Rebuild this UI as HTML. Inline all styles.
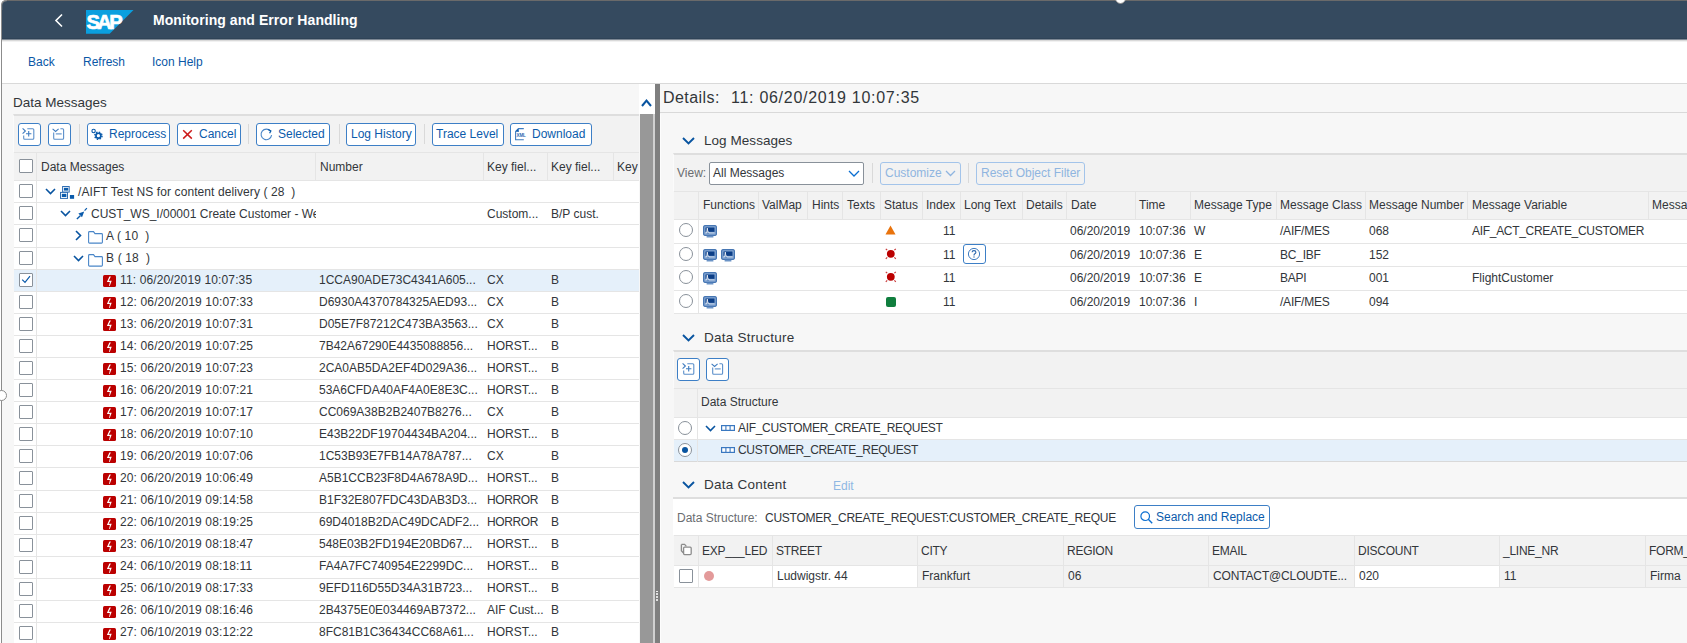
<!DOCTYPE html><html><head><meta charset="utf-8"><style>
*{margin:0;padding:0;box-sizing:border-box}
html,body{width:1687px;height:643px;overflow:hidden;background:#f7f7f7}
body{position:relative;font-family:"Liberation Sans",sans-serif;color:#32363a;font-size:12px}
.t{position:absolute;white-space:nowrap;line-height:14px}
.a{position:absolute}
svg{position:absolute;overflow:visible}
.cb{position:absolute;width:14px;height:14px;border:1px solid #89919a;border-radius:1px;background:#fff}
.btn{position:absolute;height:23px;border:1px solid #3d7fc6;border-radius:3px;color:#0b5bab;background:#fff;line-height:21px;font-size:12px;white-space:nowrap}
.sep{position:absolute;width:1px;height:20px;background:#d9d9d9}
.u{letter-spacing:-0.3px}
.rd{position:absolute;width:14px;height:14px;border:1px solid #89919a;border-radius:50%;background:#fff}
</style></head><body>
<div style="position:absolute;left:0px;top:0px;width:1687px;height:1px;background:#6a6a6a"></div>
<div style="position:absolute;left:0px;top:1px;width:1687px;height:39px;background:#354a5f"></div>
<div style="position:absolute;left:0px;top:38px;width:1687px;height:1px;background:#2f4357"></div>
<div style="position:absolute;left:0px;top:39px;width:1687px;height:1px;background:#7d8894"></div>
<svg style="left:54px;top:13px" width="10" height="15"><path d="M8 1.5 L2 7.5 L8 13.5" stroke="#fff" stroke-width="1.6" fill="none"/></svg>
<svg style="left:85.5px;top:9.7px" width="48" height="24" viewBox="0 0 48 24"><path d="M0 0 H47.5 L23.7 23.7 H0 Z" fill="#0a9fdf"/><text x="0.5" y="19.3" font-family="Liberation Sans" font-weight="bold" font-size="20.5" fill="#fff" stroke="#fff" stroke-width="0.7" letter-spacing="-2.6" transform="scale(0.98,1)">SAP</text></svg>
<div class="t" style="left:153px;top:12px;font-size:14px;font-weight:bold;color:#fff;line-height:16px;letter-spacing:0.06px">Monitoring and Error Handling</div>
<div style="position:absolute;left:0px;top:40px;width:1687px;height:44px;background:#fff"></div>
<div style="position:absolute;left:0px;top:40px;width:1687px;height:1px;background:#d9d9d9"></div>
<div style="position:absolute;left:0px;top:41px;width:1687px;height:1px;background:#f1f1f1"></div>
<div style="position:absolute;left:0px;top:83px;width:1687px;height:1px;background:#d9d9d9"></div>
<div class="t" style="left:28px;top:54px;color:#0a57a6;font-size:12px;line-height:16px">Back</div>
<div class="t" style="left:83px;top:54px;color:#0a57a6;font-size:12px;line-height:16px">Refresh</div>
<div class="t" style="left:152px;top:54px;color:#0a57a6;font-size:12px;line-height:16px">Icon Help</div>
<div style="position:absolute;left:1px;top:0px;width:1px;height:643px;background:#8c8c8c"></div>
<div style="position:absolute;left:2px;top:84px;width:637px;height:559px;background:#f7f7f7"></div>
<div class="t" style="left:13px;top:95px;font-size:13.5px;line-height:16px">Data Messages</div>
<div style="position:absolute;left:639px;top:84px;width:15px;height:30px;background:#fff"></div>
<svg style="left:641px;top:98px" width="11" height="9"><path d="M1 8 L5.5 2.5 L10 8" stroke="#0854a0" stroke-width="2" fill="none"/></svg>
<div style="position:absolute;left:640px;top:114px;width:13px;height:529px;background:#989898"></div>
<div style="position:absolute;left:653px;top:84px;width:2px;height:30px;background:#fff"></div>
<div style="position:absolute;left:653px;top:114px;width:2px;height:529px;background:#d0d0d0"></div>
<div style="position:absolute;left:655px;top:84px;width:5px;height:559px;background:#7f7f7f"></div>
<div style="position:absolute;left:656px;top:590.5px;width:2px;height:1.8px;background:#fff;border-radius:1px"></div>
<div style="position:absolute;left:656px;top:593.3px;width:2px;height:1.8px;background:#fff;border-radius:1px"></div>
<div style="position:absolute;left:656px;top:596.1px;width:2px;height:1.8px;background:#fff;border-radius:1px"></div>
<div style="position:absolute;left:656px;top:598.9px;width:2px;height:1.8px;background:#fff;border-radius:1px"></div>
<div style="position:absolute;left:13px;top:114px;width:626px;height:38px;background:#f2f2f2;border-top:2px solid #dedede;border-left:1px solid #fbfbfb"></div>
<div class="btn" style="left:18px;top:123px;width:23px;height:23px"></div>
<div class="btn" style="left:48px;top:123px;width:23px;height:23px"></div>
<svg style="left:22px;top:128px" width="14" height="14" viewBox="0 0 14 14"><path d="M0.6 0.3 L3.4 3 L0.6 5.7" stroke="#3f7cc0" stroke-width="1.1" fill="none"/><path d="M5.3 0.8 H10.8 Q11.8 0.8 11.8 1.8 V10.2 Q11.8 11.2 10.8 11.2 H2.7 Q1.7 11.2 1.7 10.2 V7.6" stroke="#5b8fca" stroke-width="1.1" fill="none"/><path d="M6.7 3.1 V8.5 M4 5.8 H9.4" stroke="#3f7cc0" stroke-width="1.1"/></svg>
<svg style="left:52px;top:128px" width="14" height="14" viewBox="0 0 14 14"><path d="M0.6 0.8 L3.6 3.4 L6.6 0.8" stroke="#3f7cc0" stroke-width="1.1" fill="none"/><path d="M8.4 0.8 H10.6 Q11.6 0.8 11.6 1.8 V10.2 Q11.6 11.2 10.6 11.2 H2.7 Q1.7 11.2 1.7 10.2 V4.4" stroke="#5b8fca" stroke-width="1.1" fill="none"/><path d="M3.8 5.9 H9.7" stroke="#5b8fca" stroke-width="1.1"/></svg>
<div class="sep" style="left:79px;top:124px"></div>
<div class="btn" style="left:87px;top:123px;width:83px"><span style="position:absolute;left:21px;top:0">Reprocess</span><svg style="left:0;top:0" width="20" height="20" viewBox="0 0 20 20"><circle cx="5.6" cy="7" r="1.7" stroke="#0b5bab" stroke-width="1.1" fill="none"/><circle cx="10.4" cy="11.7" r="2.45" stroke="#0b5bab" stroke-width="1.7" fill="none"/><circle cx="10.4" cy="11.7" r="3.6" stroke="#0b5bab" stroke-width="1.5" fill="none" stroke-dasharray="1.45 1.38"/></svg></div>
<div class="btn" style="left:177px;top:123px;width:64px"><span style="position:absolute;left:21px;top:0">Cancel</span><svg style="left:4px;top:5px" width="11" height="11" viewBox="0 0 11 11"><path d="M1.2 1.2 L9.8 9.6 M9.8 1.2 L1.2 9.6" stroke="#cc1a1a" stroke-width="1.5"/></svg></div>
<div class="sep" style="left:248px;top:124px"></div>
<div class="btn" style="left:256px;top:123px;width:74px"><span style="position:absolute;left:21px;top:0">Selected</span><svg style="left:3px;top:4px" width="13" height="13" viewBox="0 0 13 13"><path d="M10.6 3.2 A5.3 5.3 0 1 0 11.6 7.2" stroke="#4a86c8" stroke-width="1.1" fill="none"/><path d="M8.2 1.4 L10.9 2.9 L9.6 5.3" stroke="#0b5bab" stroke-width="1.2" fill="none"/></svg></div>
<div class="sep" style="left:339px;top:124px"></div>
<div class="btn" style="left:346px;top:123px;width:70px"><span style="position:absolute;left:4px;top:0">Log History</span></div>
<div class="sep" style="left:424px;top:124px"></div>
<div class="btn" style="left:432px;top:123px;width:72px"><span style="position:absolute;left:3px;top:0">Trace Level</span></div>
<div class="btn" style="left:510px;top:123px;width:82px"><span style="position:absolute;left:21px;top:0">Download</span><svg style="left:3.5px;top:3.5px" width="14" height="14" viewBox="0 0 14 14"><path d="M8.8 0.6 H3.4 L0.6 3.4 V11.8 H8.8 M0.6 3.4 H3.4 V0.6" stroke="#3f7cc0" stroke-width="1.1" fill="none"/><path d="M1 3 L3 1 V3 Z" fill="#0b5bab"/><text x="1.6" y="8.6" font-size="4.6" font-family="Liberation Sans" font-weight="bold" fill="#2f6db3" letter-spacing="-0.2">XML</text></svg></div>
<div style="position:absolute;left:14px;top:152px;width:625px;height:29px;background:#f2f2f2;border-top:1px solid #e5e5e5;border-bottom:1px solid #e5e5e5"></div>
<div style="position:absolute;left:36px;top:153px;width:1px;height:28px;background:#e5e5e5"></div>
<div style="position:absolute;left:315px;top:153px;width:1px;height:28px;background:#e5e5e5"></div>
<div style="position:absolute;left:483px;top:153px;width:1px;height:28px;background:#e5e5e5"></div>
<div style="position:absolute;left:547px;top:153px;width:1px;height:28px;background:#e5e5e5"></div>
<div style="position:absolute;left:613px;top:153px;width:1px;height:28px;background:#e5e5e5"></div>
<div class="cb" style="left:19px;top:159px"></div>
<div class="t" style="left:41px;top:160px;">Data Messages</div>
<div class="t" style="left:320px;top:160px;">Number</div>
<div class="t" style="left:487px;top:160px;">Key fiel...</div>
<div class="t" style="left:551px;top:160px;">Key fiel...</div>
<div class="t" style="left:617px;top:160px;">Key</div>
<div style="position:absolute;left:14px;top:181px;width:625px;height:22px;background:#fff;border-bottom:1px solid #e5e5e5"></div>
<div style="position:absolute;left:36px;top:181px;width:1px;height:22px;background:#e5e5e5"></div>
<div class="cb" style="left:19px;top:184px"></div>
<svg style="left:45px;top:188px" width="11" height="7" viewBox="0 0 11 7"><path d="M1 1 L5.5 5.5 L10 1" stroke="#0854a0" stroke-width="1.6" fill="none"/></svg>
<svg style="left:60px;top:186px" width="15" height="13" viewBox="0 0 15 13"><rect x="2.6" y="0.5" width="6.6" height="5.6" stroke="#2f6db3" stroke-width="1" fill="#fff"/><rect x="3.9" y="1.8" width="4.3" height="2.8" fill="#0b5bab"/><rect x="0.5" y="6.4" width="7" height="6" stroke="#2f6db3" stroke-width="1" fill="#fff"/><rect x="1.8" y="7.8" width="4.6" height="3.2" fill="#0b5bab"/><rect x="9.9" y="9" width="4.2" height="3.8" fill="#0b5bab"/></svg>
<div class="t" style="left:78px;top:185px;letter-spacing:0.09px">/AIFT Test NS for content delivery ( 28&nbsp; )</div>
<div style="position:absolute;left:14px;top:203px;width:625px;height:22px;background:#fff;border-bottom:1px solid #e5e5e5"></div>
<div style="position:absolute;left:36px;top:203px;width:1px;height:22px;background:#e5e5e5"></div>
<div class="cb" style="left:19px;top:206px"></div>
<svg style="left:60px;top:210px" width="11" height="7" viewBox="0 0 11 7"><path d="M1 1 L5.5 5.5 L10 1" stroke="#0854a0" stroke-width="1.6" fill="none"/></svg>
<svg style="left:76px;top:207px" width="12" height="13" viewBox="0 0 12 13"><path d="M0.9 12.1 L4.3 8.7" stroke="#0b5bab" stroke-width="1.4"/><path d="M8.2 4.4 L2.4 6.6 L6 10.2 Z" fill="#0b5bab"/><path d="M8.6 3.6 L10.9 1.2" stroke="#0b5bab" stroke-width="1.2"/></svg>
<div class="t" style="left:91px;top:207px;width:225px;overflow:hidden">CUST_WS_I/00001 Create Customer - Web</div>
<div class="t" style="left:487px;top:207px;">Custom...</div>
<div class="t" style="left:551px;top:207px;">B/P cust.</div>
<div style="position:absolute;left:14px;top:225px;width:625px;height:23px;background:#fff;border-bottom:1px solid #e5e5e5"></div>
<div style="position:absolute;left:36px;top:225px;width:1px;height:23px;background:#e5e5e5"></div>
<div class="cb" style="left:19px;top:228px"></div>
<svg style="left:75px;top:230px" width="7" height="11" viewBox="0 0 7 11"><path d="M1 1 L5.5 5.5 L1 10" stroke="#0854a0" stroke-width="1.6" fill="none"/></svg>
<svg style="left:88px;top:231px" width="16" height="13" viewBox="0 0 16 13"><path d="M1.5 0.6 H5.5 L7 2.6 H13.5 Q14.4 2.6 14.4 3.5 V11.2 Q14.4 12.1 13.5 12.1 H1.5 Q0.6 12.1 0.6 11.2 V1.5 Q0.6 0.6 1.5 0.6 Z" stroke="#4a86c8" stroke-width="1.1" fill="none"/></svg>
<div class="t" style="left:106px;top:229px;letter-spacing:0.15px">A ( 10&nbsp; )</div>
<div style="position:absolute;left:14px;top:248px;width:625px;height:22px;background:#fff;border-bottom:1px solid #e5e5e5"></div>
<div style="position:absolute;left:36px;top:248px;width:1px;height:22px;background:#e5e5e5"></div>
<div class="cb" style="left:19px;top:251px"></div>
<svg style="left:73px;top:255px" width="11" height="7" viewBox="0 0 11 7"><path d="M1 1 L5.5 5.5 L10 1" stroke="#0854a0" stroke-width="1.6" fill="none"/></svg>
<svg style="left:88px;top:254px" width="16" height="13" viewBox="0 0 16 13"><path d="M1.5 0.6 H5.5 L7 2.6 H13.5 Q14.4 2.6 14.4 3.5 V11.2 Q14.4 12.1 13.5 12.1 H1.5 Q0.6 12.1 0.6 11.2 V1.5 Q0.6 0.6 1.5 0.6 Z" stroke="#4a86c8" stroke-width="1.1" fill="none"/></svg>
<div class="t" style="left:106px;top:251px;letter-spacing:0.15px">B ( 18&nbsp; )</div>
<div style="position:absolute;left:14px;top:270px;width:625px;height:22px;background:#e5f0fa;border-bottom:1px solid #e5e5e5"></div>
<div style="position:absolute;left:36px;top:270px;width:1px;height:22px;background:#e5e5e5"></div>
<div class="cb" style="left:19px;top:273px"></div>
<svg style="left:21px;top:275px" width="10" height="9" viewBox="0 0 10 9"><path d="M1.2 4.6 L4 7.4 L9 1.2" stroke="#0b5bab" stroke-width="1.2" fill="none"/></svg>
<div class="a" style="left:103.4px;top:274.7px;width:12.6px;height:12.4px;background:#bb0000;border-radius:1.5px"><svg style="left:0;top:0" width="13" height="13" viewBox="0 0 13 13"><path d="M6.4 1.4 L7.9 1.4 L5.7 5.7 L8.7 5.7 L6.7 11.1 L6.1 11.1 L6.9 6.9 L3.9 6.9 Z" fill="#fff"/></svg></div>
<div class="t" style="left:120px;top:273px;letter-spacing:0.13px">11: 06/20/2019 10:07:35</div>
<div class="t" style="left:319px;top:273px;">1CCA90ADE73C4341A605...</div>
<div class="t" style="left:487px;top:273px;">CX</div>
<div class="t" style="left:551px;top:273px;">B</div>
<div style="position:absolute;left:14px;top:292px;width:625px;height:22px;background:#fff;border-bottom:1px solid #e5e5e5"></div>
<div style="position:absolute;left:36px;top:292px;width:1px;height:22px;background:#e5e5e5"></div>
<div class="cb" style="left:19px;top:295px"></div>
<div class="a" style="left:103.4px;top:296.7px;width:12.6px;height:12.4px;background:#bb0000;border-radius:1.5px"><svg style="left:0;top:0" width="13" height="13" viewBox="0 0 13 13"><path d="M6.4 1.4 L7.9 1.4 L5.7 5.7 L8.7 5.7 L6.7 11.1 L6.1 11.1 L6.9 6.9 L3.9 6.9 Z" fill="#fff"/></svg></div>
<div class="t" style="left:120px;top:295px;letter-spacing:0.13px">12: 06/20/2019 10:07:33</div>
<div class="t" style="left:319px;top:295px;">D6930A4370784325AED93...</div>
<div class="t" style="left:487px;top:295px;">CX</div>
<div class="t" style="left:551px;top:295px;">B</div>
<div style="position:absolute;left:14px;top:314px;width:625px;height:22px;background:#fff;border-bottom:1px solid #e5e5e5"></div>
<div style="position:absolute;left:36px;top:314px;width:1px;height:22px;background:#e5e5e5"></div>
<div class="cb" style="left:19px;top:317px"></div>
<div class="a" style="left:103.4px;top:318.7px;width:12.6px;height:12.4px;background:#bb0000;border-radius:1.5px"><svg style="left:0;top:0" width="13" height="13" viewBox="0 0 13 13"><path d="M6.4 1.4 L7.9 1.4 L5.7 5.7 L8.7 5.7 L6.7 11.1 L6.1 11.1 L6.9 6.9 L3.9 6.9 Z" fill="#fff"/></svg></div>
<div class="t" style="left:120px;top:317px;letter-spacing:0.13px">13: 06/20/2019 10:07:31</div>
<div class="t" style="left:319px;top:317px;">D05E7F87212C473BA3563...</div>
<div class="t" style="left:487px;top:317px;">CX</div>
<div class="t" style="left:551px;top:317px;">B</div>
<div style="position:absolute;left:14px;top:336px;width:625px;height:22px;background:#fff;border-bottom:1px solid #e5e5e5"></div>
<div style="position:absolute;left:36px;top:336px;width:1px;height:22px;background:#e5e5e5"></div>
<div class="cb" style="left:19px;top:339px"></div>
<div class="a" style="left:103.4px;top:340.7px;width:12.6px;height:12.4px;background:#bb0000;border-radius:1.5px"><svg style="left:0;top:0" width="13" height="13" viewBox="0 0 13 13"><path d="M6.4 1.4 L7.9 1.4 L5.7 5.7 L8.7 5.7 L6.7 11.1 L6.1 11.1 L6.9 6.9 L3.9 6.9 Z" fill="#fff"/></svg></div>
<div class="t" style="left:120px;top:339px;letter-spacing:0.13px">14: 06/20/2019 10:07:25</div>
<div class="t" style="left:319px;top:339px;">7B42A67290E4435088856...</div>
<div class="t" style="left:487px;top:339px;">HORST...</div>
<div class="t" style="left:551px;top:339px;">B</div>
<div style="position:absolute;left:14px;top:358px;width:625px;height:22px;background:#fff;border-bottom:1px solid #e5e5e5"></div>
<div style="position:absolute;left:36px;top:358px;width:1px;height:22px;background:#e5e5e5"></div>
<div class="cb" style="left:19px;top:361px"></div>
<div class="a" style="left:103.4px;top:362.7px;width:12.6px;height:12.4px;background:#bb0000;border-radius:1.5px"><svg style="left:0;top:0" width="13" height="13" viewBox="0 0 13 13"><path d="M6.4 1.4 L7.9 1.4 L5.7 5.7 L8.7 5.7 L6.7 11.1 L6.1 11.1 L6.9 6.9 L3.9 6.9 Z" fill="#fff"/></svg></div>
<div class="t" style="left:120px;top:361px;letter-spacing:0.13px">15: 06/20/2019 10:07:23</div>
<div class="t" style="left:319px;top:361px;">2CA0AB5DA2EF4D029A36...</div>
<div class="t" style="left:487px;top:361px;">HORST...</div>
<div class="t" style="left:551px;top:361px;">B</div>
<div style="position:absolute;left:14px;top:380px;width:625px;height:22px;background:#fff;border-bottom:1px solid #e5e5e5"></div>
<div style="position:absolute;left:36px;top:380px;width:1px;height:22px;background:#e5e5e5"></div>
<div class="cb" style="left:19px;top:383px"></div>
<div class="a" style="left:103.4px;top:384.7px;width:12.6px;height:12.4px;background:#bb0000;border-radius:1.5px"><svg style="left:0;top:0" width="13" height="13" viewBox="0 0 13 13"><path d="M6.4 1.4 L7.9 1.4 L5.7 5.7 L8.7 5.7 L6.7 11.1 L6.1 11.1 L6.9 6.9 L3.9 6.9 Z" fill="#fff"/></svg></div>
<div class="t" style="left:120px;top:383px;letter-spacing:0.13px">16: 06/20/2019 10:07:21</div>
<div class="t" style="left:319px;top:383px;">53A6CFDA40AF4A0E8E3C...</div>
<div class="t" style="left:487px;top:383px;">HORST...</div>
<div class="t" style="left:551px;top:383px;">B</div>
<div style="position:absolute;left:14px;top:402px;width:625px;height:22px;background:#fff;border-bottom:1px solid #e5e5e5"></div>
<div style="position:absolute;left:36px;top:402px;width:1px;height:22px;background:#e5e5e5"></div>
<div class="cb" style="left:19px;top:405px"></div>
<div class="a" style="left:103.4px;top:406.7px;width:12.6px;height:12.4px;background:#bb0000;border-radius:1.5px"><svg style="left:0;top:0" width="13" height="13" viewBox="0 0 13 13"><path d="M6.4 1.4 L7.9 1.4 L5.7 5.7 L8.7 5.7 L6.7 11.1 L6.1 11.1 L6.9 6.9 L3.9 6.9 Z" fill="#fff"/></svg></div>
<div class="t" style="left:120px;top:405px;letter-spacing:0.13px">17: 06/20/2019 10:07:17</div>
<div class="t" style="left:319px;top:405px;">CC069A38B2B2407B8276...</div>
<div class="t" style="left:487px;top:405px;">CX</div>
<div class="t" style="left:551px;top:405px;">B</div>
<div style="position:absolute;left:14px;top:424px;width:625px;height:22px;background:#fff;border-bottom:1px solid #e5e5e5"></div>
<div style="position:absolute;left:36px;top:424px;width:1px;height:22px;background:#e5e5e5"></div>
<div class="cb" style="left:19px;top:427px"></div>
<div class="a" style="left:103.4px;top:428.7px;width:12.6px;height:12.4px;background:#bb0000;border-radius:1.5px"><svg style="left:0;top:0" width="13" height="13" viewBox="0 0 13 13"><path d="M6.4 1.4 L7.9 1.4 L5.7 5.7 L8.7 5.7 L6.7 11.1 L6.1 11.1 L6.9 6.9 L3.9 6.9 Z" fill="#fff"/></svg></div>
<div class="t" style="left:120px;top:427px;letter-spacing:0.13px">18: 06/20/2019 10:07:10</div>
<div class="t" style="left:319px;top:427px;">E43B22DF19704434BA204...</div>
<div class="t" style="left:487px;top:427px;">HORST...</div>
<div class="t" style="left:551px;top:427px;">B</div>
<div style="position:absolute;left:14px;top:446px;width:625px;height:22px;background:#fff;border-bottom:1px solid #e5e5e5"></div>
<div style="position:absolute;left:36px;top:446px;width:1px;height:22px;background:#e5e5e5"></div>
<div class="cb" style="left:19px;top:449px"></div>
<div class="a" style="left:103.4px;top:450.7px;width:12.6px;height:12.4px;background:#bb0000;border-radius:1.5px"><svg style="left:0;top:0" width="13" height="13" viewBox="0 0 13 13"><path d="M6.4 1.4 L7.9 1.4 L5.7 5.7 L8.7 5.7 L6.7 11.1 L6.1 11.1 L6.9 6.9 L3.9 6.9 Z" fill="#fff"/></svg></div>
<div class="t" style="left:120px;top:449px;letter-spacing:0.13px">19: 06/20/2019 10:07:06</div>
<div class="t" style="left:319px;top:449px;">1C53B93E7FB14A78A787...</div>
<div class="t" style="left:487px;top:449px;">CX</div>
<div class="t" style="left:551px;top:449px;">B</div>
<div style="position:absolute;left:14px;top:468px;width:625px;height:23px;background:#fff;border-bottom:1px solid #e5e5e5"></div>
<div style="position:absolute;left:36px;top:468px;width:1px;height:23px;background:#e5e5e5"></div>
<div class="cb" style="left:19px;top:471px"></div>
<div class="a" style="left:103.4px;top:472.7px;width:12.6px;height:12.4px;background:#bb0000;border-radius:1.5px"><svg style="left:0;top:0" width="13" height="13" viewBox="0 0 13 13"><path d="M6.4 1.4 L7.9 1.4 L5.7 5.7 L8.7 5.7 L6.7 11.1 L6.1 11.1 L6.9 6.9 L3.9 6.9 Z" fill="#fff"/></svg></div>
<div class="t" style="left:120px;top:471px;letter-spacing:0.13px">20: 06/20/2019 10:06:49</div>
<div class="t" style="left:319px;top:471px;">A5B1CCB23F8D4A678A9D...</div>
<div class="t" style="left:487px;top:471px;">HORST...</div>
<div class="t" style="left:551px;top:471px;">B</div>
<div style="position:absolute;left:14px;top:491px;width:625px;height:22px;background:#fff;border-bottom:1px solid #e5e5e5"></div>
<div style="position:absolute;left:36px;top:491px;width:1px;height:22px;background:#e5e5e5"></div>
<div class="cb" style="left:19px;top:494px"></div>
<div class="a" style="left:103.4px;top:495.7px;width:12.6px;height:12.4px;background:#bb0000;border-radius:1.5px"><svg style="left:0;top:0" width="13" height="13" viewBox="0 0 13 13"><path d="M6.4 1.4 L7.9 1.4 L5.7 5.7 L8.7 5.7 L6.7 11.1 L6.1 11.1 L6.9 6.9 L3.9 6.9 Z" fill="#fff"/></svg></div>
<div class="t" style="left:120px;top:493px;letter-spacing:0.13px">21: 06/10/2019 09:14:58</div>
<div class="t" style="left:319px;top:493px;">B1F32E807FDC43DAB3D3...</div>
<div class="t" style="left:487px;top:493px;letter-spacing:-0.4px">HORROR</div>
<div class="t" style="left:551px;top:493px;">B</div>
<div style="position:absolute;left:14px;top:513px;width:625px;height:22px;background:#fff;border-bottom:1px solid #e5e5e5"></div>
<div style="position:absolute;left:36px;top:513px;width:1px;height:22px;background:#e5e5e5"></div>
<div class="cb" style="left:19px;top:516px"></div>
<div class="a" style="left:103.4px;top:517.7px;width:12.6px;height:12.4px;background:#bb0000;border-radius:1.5px"><svg style="left:0;top:0" width="13" height="13" viewBox="0 0 13 13"><path d="M6.4 1.4 L7.9 1.4 L5.7 5.7 L8.7 5.7 L6.7 11.1 L6.1 11.1 L6.9 6.9 L3.9 6.9 Z" fill="#fff"/></svg></div>
<div class="t" style="left:120px;top:515px;letter-spacing:0.13px">22: 06/10/2019 08:19:25</div>
<div class="t" style="left:319px;top:515px;">69D4018B2DAC49DCADF2...</div>
<div class="t" style="left:487px;top:515px;letter-spacing:-0.4px">HORROR</div>
<div class="t" style="left:551px;top:515px;">B</div>
<div style="position:absolute;left:14px;top:535px;width:625px;height:22px;background:#fff;border-bottom:1px solid #e5e5e5"></div>
<div style="position:absolute;left:36px;top:535px;width:1px;height:22px;background:#e5e5e5"></div>
<div class="cb" style="left:19px;top:538px"></div>
<div class="a" style="left:103.4px;top:539.7px;width:12.6px;height:12.4px;background:#bb0000;border-radius:1.5px"><svg style="left:0;top:0" width="13" height="13" viewBox="0 0 13 13"><path d="M6.4 1.4 L7.9 1.4 L5.7 5.7 L8.7 5.7 L6.7 11.1 L6.1 11.1 L6.9 6.9 L3.9 6.9 Z" fill="#fff"/></svg></div>
<div class="t" style="left:120px;top:537px;letter-spacing:0.13px">23: 06/10/2019 08:18:47</div>
<div class="t" style="left:319px;top:537px;">548E03B2FD194E20BD67...</div>
<div class="t" style="left:487px;top:537px;">HORST...</div>
<div class="t" style="left:551px;top:537px;">B</div>
<div style="position:absolute;left:14px;top:557px;width:625px;height:22px;background:#fff;border-bottom:1px solid #e5e5e5"></div>
<div style="position:absolute;left:36px;top:557px;width:1px;height:22px;background:#e5e5e5"></div>
<div class="cb" style="left:19px;top:560px"></div>
<div class="a" style="left:103.4px;top:561.7px;width:12.6px;height:12.4px;background:#bb0000;border-radius:1.5px"><svg style="left:0;top:0" width="13" height="13" viewBox="0 0 13 13"><path d="M6.4 1.4 L7.9 1.4 L5.7 5.7 L8.7 5.7 L6.7 11.1 L6.1 11.1 L6.9 6.9 L3.9 6.9 Z" fill="#fff"/></svg></div>
<div class="t" style="left:120px;top:559px;letter-spacing:0.13px">24: 06/10/2019 08:18:11</div>
<div class="t" style="left:319px;top:559px;">FA4A7FC740954E2299DC...</div>
<div class="t" style="left:487px;top:559px;">HORST...</div>
<div class="t" style="left:551px;top:559px;">B</div>
<div style="position:absolute;left:14px;top:579px;width:625px;height:22px;background:#fff;border-bottom:1px solid #e5e5e5"></div>
<div style="position:absolute;left:36px;top:579px;width:1px;height:22px;background:#e5e5e5"></div>
<div class="cb" style="left:19px;top:582px"></div>
<div class="a" style="left:103.4px;top:583.7px;width:12.6px;height:12.4px;background:#bb0000;border-radius:1.5px"><svg style="left:0;top:0" width="13" height="13" viewBox="0 0 13 13"><path d="M6.4 1.4 L7.9 1.4 L5.7 5.7 L8.7 5.7 L6.7 11.1 L6.1 11.1 L6.9 6.9 L3.9 6.9 Z" fill="#fff"/></svg></div>
<div class="t" style="left:120px;top:581px;letter-spacing:0.13px">25: 06/10/2019 08:17:33</div>
<div class="t" style="left:319px;top:581px;">9EFD116D55D34A31B723...</div>
<div class="t" style="left:487px;top:581px;">HORST...</div>
<div class="t" style="left:551px;top:581px;">B</div>
<div style="position:absolute;left:14px;top:601px;width:625px;height:22px;background:#fff;border-bottom:1px solid #e5e5e5"></div>
<div style="position:absolute;left:36px;top:601px;width:1px;height:22px;background:#e5e5e5"></div>
<div class="cb" style="left:19px;top:604px"></div>
<div class="a" style="left:103.4px;top:605.7px;width:12.6px;height:12.4px;background:#bb0000;border-radius:1.5px"><svg style="left:0;top:0" width="13" height="13" viewBox="0 0 13 13"><path d="M6.4 1.4 L7.9 1.4 L5.7 5.7 L8.7 5.7 L6.7 11.1 L6.1 11.1 L6.9 6.9 L3.9 6.9 Z" fill="#fff"/></svg></div>
<div class="t" style="left:120px;top:603px;letter-spacing:0.13px">26: 06/10/2019 08:16:46</div>
<div class="t" style="left:319px;top:603px;">2B4375E0E034469AB7372...</div>
<div class="t" style="left:487px;top:603px;">AIF Cust...</div>
<div class="t" style="left:551px;top:603px;">B</div>
<div style="position:absolute;left:14px;top:623px;width:625px;height:22px;background:#fff;border-bottom:1px solid #e5e5e5"></div>
<div style="position:absolute;left:36px;top:623px;width:1px;height:22px;background:#e5e5e5"></div>
<div class="cb" style="left:19px;top:626px"></div>
<div class="a" style="left:103.4px;top:627.7px;width:12.6px;height:12.4px;background:#bb0000;border-radius:1.5px"><svg style="left:0;top:0" width="13" height="13" viewBox="0 0 13 13"><path d="M6.4 1.4 L7.9 1.4 L5.7 5.7 L8.7 5.7 L6.7 11.1 L6.1 11.1 L6.9 6.9 L3.9 6.9 Z" fill="#fff"/></svg></div>
<div class="t" style="left:120px;top:625px;letter-spacing:0.13px">27: 06/10/2019 03:12:22</div>
<div class="t" style="left:319px;top:625px;">8FC81B1C36434CC68A61...</div>
<div class="t" style="left:487px;top:625px;">HORST...</div>
<div class="t" style="left:551px;top:625px;">B</div>
<div style="position:absolute;left:660px;top:84px;width:1027px;height:559px;background:#f7f7f7"></div>
<div style="position:absolute;left:660px;top:114px;width:1px;height:529px;background:#fdfdfd"></div>
<div class="t" style="left:663px;top:89px;font-size:16px;line-height:18px;letter-spacing:0.44px">Details:</div>
<div class="t" style="left:731px;top:89px;font-size:16px;line-height:18px;letter-spacing:0.72px">11: 06/20/2019 10:07:35</div>
<div style="position:absolute;left:660px;top:112px;width:1027px;height:1px;background:#d9d9d9"></div>
<svg style="left:682px;top:137px" width="13" height="8" viewBox="0 0 13 8"><path d="M1 1 L6.5 6.5 L12 1" stroke="#0854a0" stroke-width="1.9" fill="none"/></svg>
<div class="t" style="left:704px;top:133px;font-size:13.5px;line-height:16px;letter-spacing:0.05px">Log Messages</div>
<div style="position:absolute;left:673px;top:153px;width:1014px;height:38px;background:#f2f2f2;border-top:2px solid #dedede;border-left:1px solid #fbfbfb"></div>
<div class="t" style="left:677px;top:166px;color:#6a6d70">View:</div>
<div class="a" style="left:709px;top:162px;width:155px;height:23px;background:#fff;border:1px solid #89919a;border-radius:2px"></div>
<div class="t" style="left:713px;top:166px;">All Messages</div>
<svg style="left:848px;top:170px" width="12" height="8" viewBox="0 0 12 8"><path d="M1 1 L6 6 L11 1" stroke="#0a6ed1" stroke-width="1.3" fill="none"/></svg>
<div class="sep" style="left:872px;top:163px"></div>
<div class="btn" style="left:880px;top:162px;width:81px;border-color:#a3c4ea;color:#8fb5e0;background:transparent"><span style="position:absolute;left:4px">Customize</span></div>
<svg style="left:945px;top:170px" width="11" height="7" viewBox="0 0 11 7"><path d="M1 1 L5.5 5.5 L10 1" stroke="#8fb5e0" stroke-width="1.3" fill="none"/></svg>
<div class="sep" style="left:968px;top:163px"></div>
<div class="btn" style="left:976px;top:162px;width:109px;border-color:#a3c4ea;color:#8fb5e0;background:transparent"><span style="position:absolute;left:4px">Reset Object Filter</span></div>
<div style="position:absolute;left:674px;top:191px;width:1013px;height:29px;background:#f2f2f2;border-top:1px solid #e5e5e5;border-bottom:1px solid #e5e5e5"></div>
<div style="position:absolute;left:698px;top:192px;width:1px;height:28px;background:#e5e5e5"></div>
<div style="position:absolute;left:758px;top:192px;width:1px;height:28px;background:#e5e5e5"></div>
<div style="position:absolute;left:807px;top:192px;width:1px;height:28px;background:#e5e5e5"></div>
<div style="position:absolute;left:842px;top:192px;width:1px;height:28px;background:#e5e5e5"></div>
<div style="position:absolute;left:880px;top:192px;width:1px;height:28px;background:#e5e5e5"></div>
<div style="position:absolute;left:922px;top:192px;width:1px;height:28px;background:#e5e5e5"></div>
<div style="position:absolute;left:960px;top:192px;width:1px;height:28px;background:#e5e5e5"></div>
<div style="position:absolute;left:1022px;top:192px;width:1px;height:28px;background:#e5e5e5"></div>
<div style="position:absolute;left:1066px;top:192px;width:1px;height:28px;background:#e5e5e5"></div>
<div style="position:absolute;left:1135px;top:192px;width:1px;height:28px;background:#e5e5e5"></div>
<div style="position:absolute;left:1190px;top:192px;width:1px;height:28px;background:#e5e5e5"></div>
<div style="position:absolute;left:1276px;top:192px;width:1px;height:28px;background:#e5e5e5"></div>
<div style="position:absolute;left:1365px;top:192px;width:1px;height:28px;background:#e5e5e5"></div>
<div style="position:absolute;left:1467px;top:192px;width:1px;height:28px;background:#e5e5e5"></div>
<div style="position:absolute;left:1648px;top:192px;width:1px;height:28px;background:#e5e5e5"></div>
<div class="t" style="left:703px;top:198px;">Functions</div>
<div class="t" style="left:762px;top:198px;">ValMap</div>
<div class="t" style="left:812px;top:198px;">Hints</div>
<div class="t" style="left:847px;top:198px;">Texts</div>
<div class="t" style="left:884px;top:198px;">Status</div>
<div class="t" style="left:926px;top:198px;">Index</div>
<div class="t" style="left:964px;top:198px;">Long Text</div>
<div class="t" style="left:1026px;top:198px;">Details</div>
<div class="t" style="left:1071px;top:198px;">Date</div>
<div class="t" style="left:1139px;top:198px;">Time</div>
<div class="t" style="left:1194px;top:198px;">Message Type</div>
<div class="t" style="left:1280px;top:198px;">Message Class</div>
<div class="t" style="left:1369px;top:198px;">Message Number</div>
<div class="t" style="left:1472px;top:198px;">Message Variable</div>
<div class="t" style="left:1652px;top:198px;">Messa</div>
<div style="position:absolute;left:674px;top:220px;width:1013px;height:24px;background:#fff;border-bottom:1px solid #e5e5e5"></div>
<div style="position:absolute;left:698px;top:220px;width:1px;height:24px;background:#e5e5e5"></div>
<div class="rd" style="left:679px;top:223px"></div>
<svg style="left:702.5px;top:224.8px" width="14" height="13" viewBox="0 0 14 13"><rect x="0.5" y="0.5" width="13" height="10" rx="1.3" fill="#5a86bf" stroke="#4676b3" stroke-width="1"/><rect x="1.7" y="1.7" width="10.6" height="7.6" fill="#b7cbe4"/><rect x="2.2" y="2.2" width="9.6" height="6.6" fill="#5a86bf"/><rect x="2.6" y="2.6" width="8.8" height="4.2" fill="#0d3f87"/><path d="M2.4 7.9 H3.7 L4.3 3.1 L4.9 7.3 L5.5 6.9 L6 7.9 H11.6" stroke="#fff" stroke-width="0.8" fill="none"/><rect x="3.6" y="10.8" width="6.8" height="1.7" fill="#6b93c6"/></svg>
<svg style="left:885px;top:225px" width="11" height="10" viewBox="0 0 11 10"><path d="M5.5 0.5 L10.5 9.5 H0.5 Z" fill="#e9730c"/></svg>
<div class="t" style="left:943px;top:224px;">11</div>
<div class="t" style="left:1070px;top:224px;">06/20/2019</div>
<div class="t" style="left:1139px;top:224px;">10:07:36</div>
<div class="t" style="left:1194px;top:224px;">W</div>
<div class="t" style="left:1280px;top:224px;letter-spacing:-0.22px">/AIF/MES</div>
<div class="t" style="left:1369px;top:224px;">068</div>
<div class="t" style="left:1472px;top:224px;letter-spacing:-0.3px">AIF_ACT_CREATE_CUSTOMER</div>
<div style="position:absolute;left:674px;top:244px;width:1013px;height:23px;background:#fff;border-bottom:1px solid #e5e5e5"></div>
<div style="position:absolute;left:698px;top:244px;width:1px;height:23px;background:#e5e5e5"></div>
<div class="rd" style="left:679px;top:247px"></div>
<svg style="left:702.5px;top:248.8px" width="14" height="13" viewBox="0 0 14 13"><rect x="0.5" y="0.5" width="13" height="10" rx="1.3" fill="#5a86bf" stroke="#4676b3" stroke-width="1"/><rect x="1.7" y="1.7" width="10.6" height="7.6" fill="#b7cbe4"/><rect x="2.2" y="2.2" width="9.6" height="6.6" fill="#5a86bf"/><rect x="2.6" y="2.6" width="8.8" height="4.2" fill="#0d3f87"/><path d="M2.4 7.9 H3.7 L4.3 3.1 L4.9 7.3 L5.5 6.9 L6 7.9 H11.6" stroke="#fff" stroke-width="0.8" fill="none"/><rect x="3.6" y="10.8" width="6.8" height="1.7" fill="#6b93c6"/></svg>
<svg style="left:721.0px;top:248.8px" width="14" height="13" viewBox="0 0 14 13"><rect x="0.5" y="0.5" width="13" height="10" rx="1.3" fill="#5a86bf" stroke="#4676b3" stroke-width="1"/><rect x="1.7" y="1.7" width="10.6" height="7.6" fill="#b7cbe4"/><rect x="2.2" y="2.2" width="9.6" height="6.6" fill="#5a86bf"/><rect x="2.6" y="2.6" width="8.8" height="4.2" fill="#0d3f87"/><path d="M2.4 7.9 H3.7 L4.3 3.1 L4.9 7.3 L5.5 6.9 L6 7.9 H11.6" stroke="#fff" stroke-width="0.8" fill="none"/><rect x="3.6" y="10.8" width="6.8" height="1.7" fill="#6b93c6"/></svg>
<svg style="left:885px;top:248.2px" width="12" height="12" viewBox="0 0 12 12"><circle cx="5.8" cy="5.8" r="3.9" fill="#bb0000"/><path d="M0.8 0.8 L2.2 2.2 M10.8 0.8 L9.4 2.2 M0.8 10.8 L2.2 9.4 M10.8 10.8 L9.4 9.4" stroke="#c83a3a" stroke-width="1.2"/></svg>
<div class="t" style="left:943px;top:248px;">11</div>
<div class="btn" style="left:963px;top:244.4px;width:23px;height:19.5px"></div>
<svg style="left:967.2px;top:246.8px" width="14" height="14" viewBox="0 0 14 14"><circle cx="7" cy="7" r="5.6" stroke="#3f7cc0" stroke-width="1" fill="none"/><path d="M5.1 5.3 Q5.1 3.6 7 3.6 Q8.9 3.6 8.9 5.2 Q8.9 6.2 7.8 6.8 Q7 7.2 7 8.4" stroke="#2a66ad" stroke-width="1.1" fill="none"/><circle cx="7" cy="10" r="0.65" fill="#2a66ad"/></svg>
<div class="t" style="left:1070px;top:248px;">06/20/2019</div>
<div class="t" style="left:1139px;top:248px;">10:07:36</div>
<div class="t" style="left:1194px;top:248px;">E</div>
<div class="t" style="left:1280px;top:248px;letter-spacing:-0.22px">BC_IBF</div>
<div class="t" style="left:1369px;top:248px;">152</div>
<div style="position:absolute;left:674px;top:267px;width:1013px;height:24px;background:#fff;border-bottom:1px solid #e5e5e5"></div>
<div style="position:absolute;left:698px;top:267px;width:1px;height:24px;background:#e5e5e5"></div>
<div class="rd" style="left:679px;top:270px"></div>
<svg style="left:702.5px;top:271.8px" width="14" height="13" viewBox="0 0 14 13"><rect x="0.5" y="0.5" width="13" height="10" rx="1.3" fill="#5a86bf" stroke="#4676b3" stroke-width="1"/><rect x="1.7" y="1.7" width="10.6" height="7.6" fill="#b7cbe4"/><rect x="2.2" y="2.2" width="9.6" height="6.6" fill="#5a86bf"/><rect x="2.6" y="2.6" width="8.8" height="4.2" fill="#0d3f87"/><path d="M2.4 7.9 H3.7 L4.3 3.1 L4.9 7.3 L5.5 6.9 L6 7.9 H11.6" stroke="#fff" stroke-width="0.8" fill="none"/><rect x="3.6" y="10.8" width="6.8" height="1.7" fill="#6b93c6"/></svg>
<svg style="left:885px;top:271.2px" width="12" height="12" viewBox="0 0 12 12"><circle cx="5.8" cy="5.8" r="3.9" fill="#bb0000"/><path d="M0.8 0.8 L2.2 2.2 M10.8 0.8 L9.4 2.2 M0.8 10.8 L2.2 9.4 M10.8 10.8 L9.4 9.4" stroke="#c83a3a" stroke-width="1.2"/></svg>
<div class="t" style="left:943px;top:271px;">11</div>
<div class="t" style="left:1070px;top:271px;">06/20/2019</div>
<div class="t" style="left:1139px;top:271px;">10:07:36</div>
<div class="t" style="left:1194px;top:271px;">E</div>
<div class="t" style="left:1280px;top:271px;letter-spacing:-0.22px">BAPI</div>
<div class="t" style="left:1369px;top:271px;">001</div>
<div class="t" style="left:1472px;top:271px;">FlightCustomer</div>
<div style="position:absolute;left:674px;top:291px;width:1013px;height:23px;background:#fff;border-bottom:1px solid #e5e5e5"></div>
<div style="position:absolute;left:698px;top:291px;width:1px;height:23px;background:#e5e5e5"></div>
<div class="rd" style="left:679px;top:294px"></div>
<svg style="left:702.5px;top:295.8px" width="14" height="13" viewBox="0 0 14 13"><rect x="0.5" y="0.5" width="13" height="10" rx="1.3" fill="#5a86bf" stroke="#4676b3" stroke-width="1"/><rect x="1.7" y="1.7" width="10.6" height="7.6" fill="#b7cbe4"/><rect x="2.2" y="2.2" width="9.6" height="6.6" fill="#5a86bf"/><rect x="2.6" y="2.6" width="8.8" height="4.2" fill="#0d3f87"/><path d="M2.4 7.9 H3.7 L4.3 3.1 L4.9 7.3 L5.5 6.9 L6 7.9 H11.6" stroke="#fff" stroke-width="0.8" fill="none"/><rect x="3.6" y="10.8" width="6.8" height="1.7" fill="#6b93c6"/></svg>
<div class="a" style="left:886px;top:297px;width:10px;height:10px;background:#107e3e;border-radius:2px"></div>
<div class="t" style="left:943px;top:295px;">11</div>
<div class="t" style="left:1070px;top:295px;">06/20/2019</div>
<div class="t" style="left:1139px;top:295px;">10:07:36</div>
<div class="t" style="left:1194px;top:295px;">I</div>
<div class="t" style="left:1280px;top:295px;letter-spacing:-0.22px">/AIF/MES</div>
<div class="t" style="left:1369px;top:295px;">094</div>
<svg style="left:682px;top:334px" width="13" height="8" viewBox="0 0 13 8"><path d="M1 1 L6.5 6.5 L12 1" stroke="#0854a0" stroke-width="1.9" fill="none"/></svg>
<div class="t" style="left:704px;top:330px;font-size:13.5px;line-height:16px;letter-spacing:0.25px">Data Structure</div>
<div style="position:absolute;left:673px;top:350px;width:1014px;height:38px;background:#f2f2f2;border-top:2px solid #dedede;border-left:1px solid #fbfbfb"></div>
<div class="btn" style="left:677px;top:358px;width:23px;height:23px"></div>
<div class="btn" style="left:706px;top:358px;width:23px;height:23px"></div>
<svg style="left:682px;top:363px" width="14" height="14" viewBox="0 0 14 14"><path d="M0.6 0.3 L3.4 3 L0.6 5.7" stroke="#3f7cc0" stroke-width="1.1" fill="none"/><path d="M5.3 0.8 H10.8 Q11.8 0.8 11.8 1.8 V10.2 Q11.8 11.2 10.8 11.2 H2.7 Q1.7 11.2 1.7 10.2 V7.6" stroke="#5b8fca" stroke-width="1.1" fill="none"/><path d="M6.7 3.1 V8.5 M4 5.8 H9.4" stroke="#3f7cc0" stroke-width="1.1"/></svg>
<svg style="left:711px;top:363px" width="14" height="14" viewBox="0 0 14 14"><path d="M0.6 0.8 L3.6 3.4 L6.6 0.8" stroke="#3f7cc0" stroke-width="1.1" fill="none"/><path d="M8.4 0.8 H10.6 Q11.6 0.8 11.6 1.8 V10.2 Q11.6 11.2 10.6 11.2 H2.7 Q1.7 11.2 1.7 10.2 V4.4" stroke="#5b8fca" stroke-width="1.1" fill="none"/><path d="M3.8 5.9 H9.7" stroke="#5b8fca" stroke-width="1.1"/></svg>
<div style="position:absolute;left:674px;top:388px;width:1013px;height:30px;background:#f2f2f2;border-top:1px solid #e5e5e5;border-bottom:1px solid #e5e5e5"></div>
<div style="position:absolute;left:697px;top:389px;width:1px;height:29px;background:#e5e5e5"></div>
<div class="t" style="left:701px;top:395px;">Data Structure</div>
<div style="position:absolute;left:674px;top:418px;width:1013px;height:22px;background:#fff;border-bottom:1px solid #e5e5e5"></div>
<div style="position:absolute;left:697px;top:418px;width:1px;height:22px;background:#e5e5e5"></div>
<div class="rd" style="left:678px;top:421px"></div>
<svg style="left:705px;top:425px" width="11" height="7" viewBox="0 0 11 7"><path d="M1 1 L5.5 5.5 L10 1" stroke="#0854a0" stroke-width="1.6" fill="none"/></svg>
<svg style="left:721px;top:425px" width="14" height="6" viewBox="0 0 14 6"><rect x="0.6" y="0.6" width="12.8" height="4.8" stroke="#3a78c0" stroke-width="1.2" fill="#fff"/><path d="M4.9 0.5 V5.5 M9.1 0.5 V5.5" stroke="#3a78c0" stroke-width="1.1"/></svg>
<div class="t" style="left:738px;top:421px;letter-spacing:-0.31px">AIF_CUSTOMER_CREATE_REQUEST</div>
<div style="position:absolute;left:674px;top:440px;width:1013px;height:22px;background:#e5f0fa;border-bottom:1px solid #d9d9d9"></div>
<div style="position:absolute;left:697px;top:440px;width:1px;height:22px;background:#e5e5e5"></div>
<div class="rd" style="left:678px;top:443px"></div>
<div class="a" style="left:682px;top:447px;width:6px;height:6px;border-radius:50%;background:#0854a0"></div>
<svg style="left:721px;top:447px" width="14" height="6" viewBox="0 0 14 6"><rect x="0.6" y="0.6" width="12.8" height="4.8" stroke="#3a78c0" stroke-width="1.2" fill="#fff"/><path d="M4.9 0.5 V5.5 M9.1 0.5 V5.5" stroke="#3a78c0" stroke-width="1.1"/></svg>
<div class="t" style="left:738px;top:443px;letter-spacing:-0.33px">CUSTOMER_CREATE_REQUEST</div>
<svg style="left:682px;top:481px" width="13" height="8" viewBox="0 0 13 8"><path d="M1 1 L6.5 6.5 L12 1" stroke="#0854a0" stroke-width="1.9" fill="none"/></svg>
<div class="t" style="left:704px;top:477px;font-size:13.5px;line-height:16px;letter-spacing:0.25px">Data Content</div>
<div class="t" style="left:833px;top:478px;color:#8fb8e3;font-size:12px;line-height:16px">Edit</div>
<div style="position:absolute;left:673px;top:497px;width:1014px;height:38px;background:#fff;border-top:2px solid #dedede"></div>
<div class="t" style="left:677px;top:511px;color:#6a6d70">Data Structure:</div>
<div class="t" style="left:765px;top:511px;letter-spacing:-0.24px">CUSTOMER_CREATE_REQUEST:CUSTOMER_CREATE_REQUE</div>
<div class="btn" style="left:1134px;top:505px;width:136px;height:24px"><span style="position:absolute;left:21px;top:1px">Search and Replace</span><svg style="left:5px;top:5px" width="13" height="13" viewBox="0 0 13 13"><circle cx="5.2" cy="5.2" r="4.3" stroke="#0a6ed1" stroke-width="1.2" fill="none"/><path d="M8.3 8.3 L12.2 12.2" stroke="#0a6ed1" stroke-width="1.4"/></svg></div>
<div style="position:absolute;left:674px;top:535px;width:1013px;height:31px;background:#f2f2f2;border-top:1px solid #e5e5e5;border-bottom:1px solid #e5e5e5"></div>
<div style="position:absolute;left:698px;top:536px;width:1px;height:52px;background:#e5e5e5"></div>
<div style="position:absolute;left:772px;top:536px;width:1px;height:52px;background:#e5e5e5"></div>
<div style="position:absolute;left:917px;top:536px;width:1px;height:52px;background:#e5e5e5"></div>
<div style="position:absolute;left:1063px;top:536px;width:1px;height:52px;background:#e5e5e5"></div>
<div style="position:absolute;left:1208px;top:536px;width:1px;height:52px;background:#e5e5e5"></div>
<div style="position:absolute;left:1354px;top:536px;width:1px;height:52px;background:#e5e5e5"></div>
<div style="position:absolute;left:1499px;top:536px;width:1px;height:52px;background:#e5e5e5"></div>
<div style="position:absolute;left:1645px;top:536px;width:1px;height:52px;background:#e5e5e5"></div>
<svg style="left:680px;top:543px" width="13" height="13" viewBox="0 0 13 13"><path d="M1.4 1.4 H4.6 L6.4 3.4 M1.4 1.4 V7.8 L3.2 9.8" stroke="#8c8c8c" stroke-width="1.3" fill="none"/><rect x="3.6" y="4.2" width="7.6" height="7.4" rx="1" stroke="#8c8c8c" stroke-width="1.3" fill="#fff"/></svg>
<div class="t" style="left:702px;top:544px;letter-spacing:-0.25px">EXP___LED</div>
<div class="t" style="left:776px;top:544px;letter-spacing:-0.25px">STREET</div>
<div class="t" style="left:921px;top:544px;letter-spacing:-0.25px">CITY</div>
<div class="t" style="left:1067px;top:544px;letter-spacing:-0.25px">REGION</div>
<div class="t" style="left:1212px;top:544px;letter-spacing:-0.25px">EMAIL</div>
<div class="t" style="left:1358px;top:544px;letter-spacing:-0.25px">DISCOUNT</div>
<div class="t" style="left:1503px;top:544px;letter-spacing:-0.25px">_LINE_NR</div>
<div class="t" style="left:1649px;top:544px;letter-spacing:-0.25px">FORM_</div>
<div style="position:absolute;left:674px;top:566px;width:1013px;height:22px;background:#fff;border-bottom:1px solid #e5e5e5"></div>
<div style="position:absolute;left:918px;top:566px;width:145px;height:21px;background:#f2f2f2"></div>
<div style="position:absolute;left:1064px;top:566px;width:144px;height:21px;background:#f2f2f2"></div>
<div style="position:absolute;left:1209px;top:566px;width:145px;height:21px;background:#f2f2f2"></div>
<div style="position:absolute;left:1500px;top:566px;width:145px;height:21px;background:#f2f2f2"></div>
<div style="position:absolute;left:1646px;top:566px;width:41px;height:21px;background:#f2f2f2"></div>
<div style="position:absolute;left:698px;top:566px;width:1px;height:22px;background:#e5e5e5"></div>
<div style="position:absolute;left:772px;top:566px;width:1px;height:22px;background:#e5e5e5"></div>
<div style="position:absolute;left:917px;top:566px;width:1px;height:22px;background:#e5e5e5"></div>
<div style="position:absolute;left:1063px;top:566px;width:1px;height:22px;background:#e5e5e5"></div>
<div style="position:absolute;left:1208px;top:566px;width:1px;height:22px;background:#e5e5e5"></div>
<div style="position:absolute;left:1354px;top:566px;width:1px;height:22px;background:#e5e5e5"></div>
<div style="position:absolute;left:1499px;top:566px;width:1px;height:22px;background:#e5e5e5"></div>
<div style="position:absolute;left:1645px;top:566px;width:1px;height:22px;background:#e5e5e5"></div>
<div class="cb" style="left:679px;top:569px"></div>
<div class="a" style="left:704px;top:571px;width:10px;height:10px;border-radius:50%;background:#e39a9a"></div>
<div class="t" style="left:777px;top:569px;">Ludwigstr. 44</div>
<div class="t" style="left:922px;top:569px;">Frankfurt</div>
<div class="t" style="left:1068px;top:569px;">06</div>
<div class="t" style="left:1213px;top:569px;letter-spacing:-0.15px">CONTACT@CLOUDTE...</div>
<div class="t" style="left:1359px;top:569px;">020</div>
<div class="t" style="left:1504px;top:569px;">11</div>
<div class="t" style="left:1650px;top:569px;">Firma</div>
<div style="position:absolute;left:0px;top:0px;width:1px;height:643px;background:#fff"></div>
<div class="a" style="left:-4px;top:390px;width:11px;height:11px;border-radius:50%;border:1.3px solid #8c8c8c;background:#fff"></div>
<div class="a" style="left:1115px;top:-7px;width:11px;height:11px;border-radius:50%;border:1.3px solid #8c8c8c;background:#fff"></div>
<svg style="left:0;top:0" width="10" height="10" viewBox="0 0 10 10"><path d="M0 0 H6.5 V0.3 A5 5 0 0 0 1.3 4.5 V10 H0 Z" fill="#fff"/><path d="M6.8 0.7 A5 5 0 0 0 1.6 4.8 V10" stroke="#8c8c8c" stroke-width="1.2" fill="none"/></svg>
</body></html>
